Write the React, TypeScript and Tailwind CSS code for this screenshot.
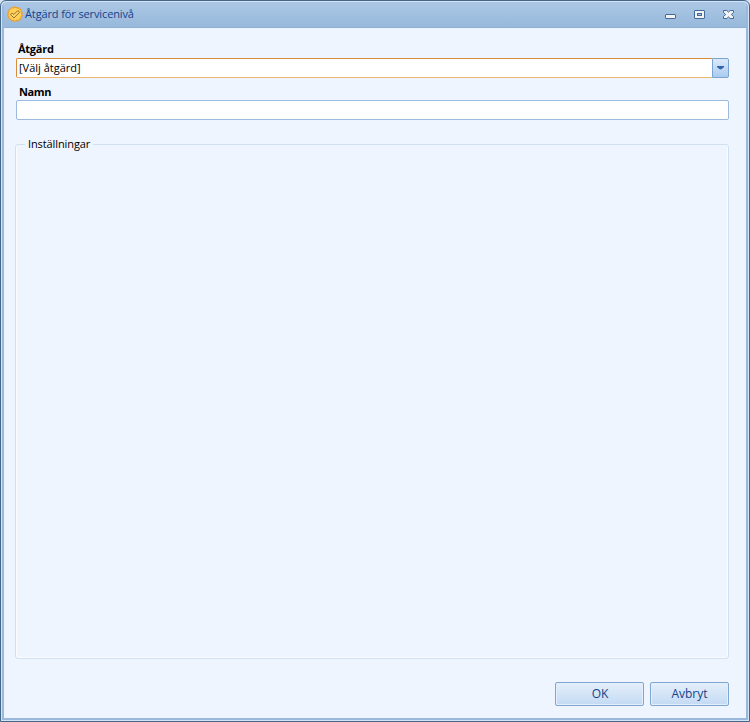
function SealIcon() {
  return (
    <svg width="16" height="16" viewBox="0 0 16 16" className="shrink-0">
      <path
        d="M5 1.500 6.500 2 8 .8 9.500 2l1.700-.5 1 1.500 1.800.5V5.500l1.300 1.300-.8 1.400.8 1.500-1.300 1.300v1.700l-1.800.6-1 1.500-1.700-.4L8 15.400l-1.500-1-1.600.4-1.100-1.500-1.800-.6V11L.7 9.700l.8-1.500-.8-1.400L2 5.500v-2L3.800 3z"
        fill="#ffd15a"
        stroke="#ef9d26"
        strokeWidth="1.100"
        strokeLinejoin="round"
      />
      <path d="m3.500 8.700 1.700-1.700 1.700 1.500L10.800 4.600l1.800 1.700-5.700 5.600z" fill="#ffdb70" stroke="#96651f" strokeWidth="1" />
    </svg>
  );
}

function WindowControls() {
  return (
    <div className="flex h-4 items-center gap-[17px] pt-0.5">
      <svg width="12" height="12" viewBox="0 0 12 12">
        <rect x=".5" y="5.5" width="10" height="4" rx=".5" fill="#f3f3f3" stroke="#416a98" />
      </svg>
      <svg width="12" height="12" viewBox="0 0 12 12">
        <rect x=".5" y="1.5" width="10" height="8" rx=".5" fill="#f3f3f3" stroke="#416a98" />
        <rect x="3.5" y="4.5" width="4" height="2" fill="#a5c1e0" stroke="#416a98" />
      </svg>
      <svg width="12" height="12" viewBox="0 0 12 12">
        <path d="M.5 1.500h3.300l1.700 1.600 1.700-1.600h3.300v2L8.300 5.500l2.200 2v2H7.200L5.500 7.900 3.800 9.500H.5v-2l2.200-2-2.200-2z" fill="#f3f3f3" stroke="#416a98" />
      </svg>
    </div>
  );
}

export default function App() {
  return (
    <div className="h-[722px] w-[750px] bg-[#d5e3f2] font-['Open_Sans','Noto_Sans',sans-serif] text-[11px] text-black">
      <div className="h-full overflow-hidden rounded-t-[6px] border border-[#446687] bg-[#d2e4f5] p-px">
        <div className="flex h-full flex-col overflow-hidden rounded-t-[5px] border-x-2 border-b-2 border-[#99b8dc] bg-[#eef5ff]">
          {/* Title bar */}
          <div className="-mx-0.5 flex h-[26px] shrink-0 items-center border-b border-[#8eb0d5] bg-linear-to-b from-[#abc7e4] to-[#98b9dc] pr-[13px] pb-px pl-[5px]">
            <SealIcon />
            <span className="ml-[2px] flex-1 leading-4 tracking-[-0.12px] whitespace-nowrap text-[#15428b]">
              Åtgärd för servicenivå
            </span>
            <WindowControls />
          </div>

          <div className="flex flex-1 flex-col pt-[13px] pr-[17px] pb-3 pl-3">
            <label className="mb-px ml-0.5 h-4 leading-4 font-bold tracking-[-0.25px]">Åtgärd</label>
            <div className="flex h-5 shrink-0">
              <div className="flex-1 rounded-l-[2px] border border-r-0 border-[#d98b3c] border-b-[#efb671] bg-white pl-0.5 leading-[18px]">
                [Välj åtgärd]
              </div>
              <button className="flex w-[17px] items-center justify-center rounded-r-[2px] border border-[#7ba4d0] bg-linear-to-b from-[#dceafa] to-[#a9cbf1] pr-px">
                <svg width="7" height="4" viewBox="0 0 7 4">
                  <path d="M0 1h7L3.500 4z" fill="#7b98bb" />
                  <path d="M0 0h7v1L4.500 3h-2L0 1z" fill="#3465aa" />
                </svg>
              </button>
            </div>

            <label className="mt-1.5 ml-[3px] h-4 leading-4 font-bold tracking-[-0.4px]">Namn</label>
            <input className="h-5 shrink-0 rounded-[2px] border border-[#9bbbdc] bg-white px-1 outline-none" />

            {/* Settings group */}
            <fieldset className="-ml-px mt-4 h-[523px] rounded-[3px] border border-[#d0e1f2] pl-[9px] shadow-[inset_1px_-1px_0_#fafcff,inset_-1px_0_0_#fafcff]">
              <legend className="px-[3px] leading-4 tracking-[-0.1px]">Inställningar</legend>
            </fieldset>

            <div className="mt-[23px] flex justify-end gap-1.5 text-[12px] text-[#15428b]">
              <button className="h-6 w-[89px] rounded-[2px] border border-[#7fa7d2] bg-linear-to-b from-[#e4effb] to-[#c4daf3] pl-px shadow-[inset_0_0_0_1px_#e3effc]">
                OK
              </button>
              <button className="h-6 w-[79px] rounded-[2px] border border-[#7fa7d2] bg-linear-to-b from-[#e4effb] to-[#c4daf3] shadow-[inset_0_0_0_1px_#e3effc]">
                Avbryt
              </button>
            </div>
          </div>
        </div>
      </div>
    </div>
  );
}
